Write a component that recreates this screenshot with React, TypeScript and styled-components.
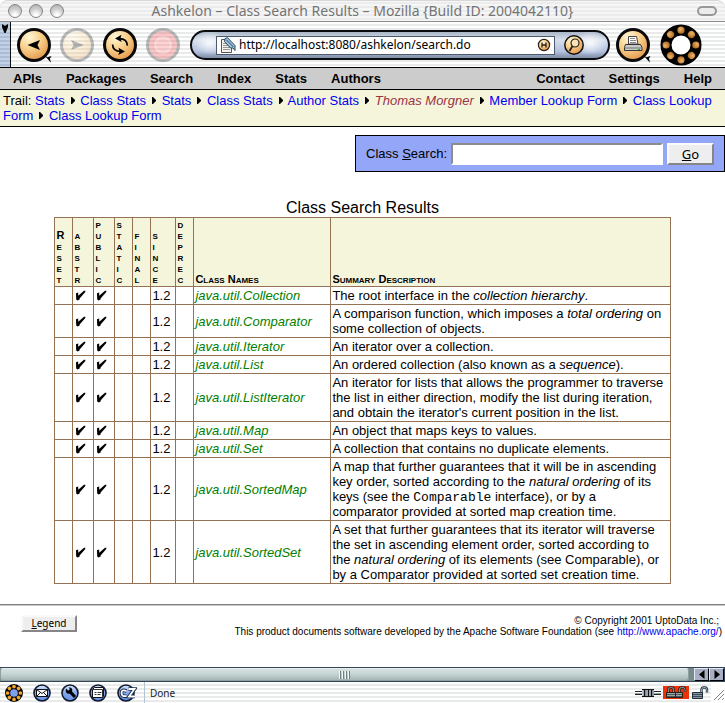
import React from "react";
import styled, { createGlobalStyle, css } from "styled-components";

const ui = `"Noto Sans", "DejaVu Sans", sans-serif`;
const stripes = css`
  background: repeating-linear-gradient(#ffffff 0 2px, #e9ebea 2px 4px);
`;

const Global = createGlobalStyle`
  * { box-sizing: border-box; }
  body {
    margin: 0;
    background: #fff;
    color: #000;
    font: 13px/15px "Liberation Sans", Arial, sans-serif;
  }
  a { color: #0000ee; text-decoration: none; }
  svg { display: block; flex: none; }
`;

const Window = styled.div`
  display: flex;
  flex-direction: column;
  min-height: 100vh;
`;
const TitleBar = styled.header`
  display: flex;
  align-items: center;
  height: 22px;
  padding: 0 8px;
  border-bottom: 1px solid #8c8c8c;
  border-radius: 8px 8px 0 0;
  background: repeating-linear-gradient(#f6f6f6 0 2px, #ececec 2px 4px);
  box-shadow: inset 0 1px #d8d8d8;
`;
const TitleSide = styled.div<{ $end?: boolean }>`
  display: flex;
  flex: 1;
  gap: 7px;
  justify-content: ${(p) => (p.$end ? "flex-end" : "flex-start")};
`;
const Light = styled.button`
  width: 14px;
  height: 14px;
  padding: 0;
  border: 1px solid #858585;
  border-radius: 50%;
  background: radial-gradient(circle at 50% 85%, #fff 10%, #d2d2d2 50%, #a9a9a9 100%);
`;
const Collapse = styled.button`
  width: 20px;
  height: 10px;
  padding: 0;
  border: 2px solid #989898;
  border-radius: 5px;
  background: #ececec;
`;
const Title = styled.h1`
  margin: 0;
  color: #747474;
  font: 14px/20px ${ui};
  white-space: nowrap;
`;

const Toolbar = styled.div`
  display: flex;
  align-items: center;
  height: 46px;
  padding-right: 23px;
  border-bottom: 1px solid #000;
  ${stripes}
`;
const Grippy = styled.button`
  align-self: stretch;
  display: flex;
  justify-content: center;
  width: 11px;
  padding: 2px 0;
  border: 0;
  border-right: 1px solid #111;
  background: repeating-linear-gradient(#c4d1e5 0 2px, #acbcd6 2px 4px);
`;
const RoundGroup = styled.div`
  display: flex;
  gap: 5px;
  margin: 0 8px 0 4px;
`;
const ToolButton = styled.button<{ $dim?: boolean }>`
  padding: 0;
  border: 0;
  background: none;
  opacity: ${(p) => (p.$dim ? 0.28 : 1)};
`;
const Pill = styled.div`
  display: flex;
  flex: 1;
  align-items: center;
  gap: 9px;
  height: 30px;
  margin-top: 1px;
  padding: 0 24px;
  border: 2px solid #0c0c10;
  border-radius: 15px;
  background:
    radial-gradient(ellipse 16px 12px at 18px 11px, #ffffffdd, #ffffff00),
    radial-gradient(ellipse 16px 12px at calc(100% - 18px) 11px, #ffffffdd, #ffffff00),
    linear-gradient(#a9b5c6, #d7dfed 30%, #b3c1df 75%, #7f8ca6);
`;
const UrlBox = styled.label`
  display: flex;
  flex: 1;
  align-items: center;
  gap: 3px;
  height: 19px;
  padding: 0 3px;
  border: 1px solid #4d5a6c;
  background: #fff;
`;
const UrlInput = styled.input`
  flex: 1;
  min-width: 0;
  padding: 0;
  border: 0;
  outline: 0;
  background: none;
  color: #000;
  font: 12px/16px ${ui};
`;

const Menu = styled.nav`
  display: flex;
  align-items: center;
  gap: 24px;
  height: 22px;
  padding: 0 13px;
  border-bottom: 1px solid #000;
  background: #ccc;
  font-weight: bold;
`;
const MenuLink = styled.a<{ $push?: boolean }>`
  color: #000;
  margin-left: ${(p) => (p.$push ? "auto" : "0")};
`;
const Trail = styled.div`
  padding: 3px;
  border-bottom: 1px solid #000;
  background: #f5f5dc;
`;
const Member = styled.a`
  color: #993344;
  font-style: italic;
`;
const Step = styled.svg`
  && {
    display: inline-block;
    margin: 0 2px 1px 6px;
  }
`;

const SearchForm = styled.form`
  display: flex;
  align-items: center;
  align-self: flex-end;
  gap: 4px;
  height: 37px;
  margin-top: 8px;
  padding: 0 10px;
  border: 1px solid #000;
  background: #94a6f7;
`;
const SearchInput = styled.input`
  width: 212px;
  height: 22px;
  border: 2px solid;
  border-color: #8c8c8c #fff #fff #8c8c8c;
  outline: 0;
  background: #fff;
  font: inherit;
`;
const PushButton = styled.button<{ $small?: boolean }>`
  width: ${(p) => (p.$small ? 56 : 47)}px;
  height: ${(p) => (p.$small ? 17 : 22)}px;
  padding: 0;
  border: 2px solid;
  border-color: #fafafa #868686 #868686 #fafafa;
  background: #eee;
  color: #000;
  font: ${(p) => (p.$small ? "10px/13px" : "13px/18px")} ${ui};
`;

const Results = styled.table`
  width: 85%;
  margin: 26px auto 0;
  border-collapse: collapse;
  table-layout: fixed;
`;
const Caption = styled.caption`
  font-size: 16px;
  line-height: 19px;
`;
const Col = styled.col<{ $w?: number }>`
  width: ${(p) => (p.$w ? `${p.$w}px` : "auto")};
`;
const cell = css`
  padding: 1px;
  border: 1px solid #967255;
  text-align: left;
`;
const Head = styled.th`
  ${cell}
  background: #f5f5dc;
  vertical-align: bottom;
  font-size: 11px;
  line-height: 11px;
  font-variant: small-caps;
`;
const Letter = styled.span`
  display: block;
`;
const Cell = styled.td`
  ${cell}
  vertical-align: middle;
`;
const Description = styled(Cell)`
  padding-right: 6px;
`;
const Tick = styled.svg`
  margin-left: 1px;
`;
const ClassLink = styled.a`
  color: #008000;
  font-style: italic;
`;
const Code = styled.code`
  font: 13px/12px "Liberation Mono", monospace;
`;

const Rule = styled.hr`
  width: 100%;
  margin: 20px 0 9px;
  border: 0;
  border-top: 1px solid #808080;
  border-bottom: 1px solid #c8c8c8;
`;
const Footer = styled.footer`
  display: flex;
  align-items: flex-start;
  justify-content: space-between;
  padding: 0 3px 0 21px;
`;
const Legal = styled.p`
  margin: 0;
  text-align: right;
  font-size: 10px;
  line-height: 11px;
`;
const LegalLine = styled.span<{ $inset?: boolean }>`
  display: block;
  padding-right: ${(p) => (p.$inset ? 3 : 0)}px;
`;

const ScrollBar = styled.div`
  display: flex;
  height: 15px;
  margin-top: auto;
  border: 1px solid #35455a;
  border-left-width: 0;
  background: #788b8b;
`;
const Thumb = styled.div`
  display: flex;
  flex: 1;
  align-items: center;
  justify-content: center;
  margin-right: 5px;
  border: 1px solid #8fa09f;
  border-top-color: #e6efee;
  border-radius: 3px;
  background: linear-gradient(#d5e1e0, #c4d3d2 50%, #a4b5b4);
`;
const ScrollButton = styled.button`
  display: flex;
  align-items: center;
  justify-content: center;
  width: 15px;
  padding: 0;
  border: 1px solid;
  border-color: #e4e8f4 #000 #000 #e4e8f4;
  background: #a9afc2;
`;
const Status = styled.div`
  display: flex;
  align-items: center;
  height: 21px;
  ${stripes}
`;
const StatusIcons = styled.div`
  display: flex;
  gap: 10px;
  padding: 0 7px 0 5px;
`;
const StatusText = styled.span`
  align-self: stretch;
  flex: 1;
  padding-left: 5px;
  border-left: 1px solid #b3c4d3;
  color: #222;
  font: 10px/22px ${ui};
`;
const Indicators = styled.div`
  display: flex;
  align-items: center;
  gap: 2px;
`;
const DefsHolder = styled.div`
  position: absolute;
`;

const Disc = ({ fill, children }: { fill: string; children?: React.ReactNode }) => (
  <svg width="38" height="38" viewBox="0 0 38 38">
    <circle cx="19" cy="19" r="15.5" fill={`url(#${fill})`} stroke="#0a0a0a" strokeWidth="3" />
    {children}
  </svg>
);

const Defs = () => (
  <svg width="0" height="0" aria-hidden="true">
    <defs>
      <radialGradient id="amber" cx=".35" cy=".25" r=".85">
        <stop offset="0" stopColor="#fff6d5" />
        <stop offset=".45" stopColor="#f8cf8b" />
        <stop offset="1" stopColor="#df8f40" />
      </radialGradient>
      <radialGradient id="red" cx=".5" cy=".5" r=".5">
        <stop offset="0" stopColor="#ff6868" />
        <stop offset=".5" stopColor="#ee2a30" />
        <stop offset="1" stopColor="#ee4146" />
      </radialGradient>
      <linearGradient id="blue" x1="0" y1="0" x2="0" y2="1">
        <stop offset="0" stopColor="#dde9ff" />
        <stop offset=".5" stopColor="#83a8ee" />
        <stop offset="1" stopColor="#6790e6" />
      </linearGradient>
      <radialGradient id="bead" cx=".4" cy=".35" r=".6">
        <stop offset="0" stopColor="#ecb66c" />
        <stop offset="1" stopColor="#b06d24" />
      </radialGradient>
    </defs>
  </svg>
);

const Corner = () => <path d="M30 30l2.5 1.200 4-1.200-1.600 2.800 1.200 4-3-3.400z" fill="#000" />;

const angles = [0, 45, 90, 135, 180, 225, 270, 315];

const Check = () => (
  <Tick width="11" height="11" viewBox="0 0 11 11" role="img" aria-label="yes">
    <path d="M1 3.2L3.2 2.5V5.8L9 .8H10.300V2L4.600 8.600V9.600L2.600 10.400L1.200 9.500Z" fill="#000" />
  </Tick>
);

const Badge = ({ children }: { children: React.ReactNode }) => (
  <svg width="18" height="18" viewBox="0 0 18 18">
    <circle cx="9" cy="9" r="8" fill="url(#blue)" stroke="#101a30" strokeWidth="1.6" />
    {children}
  </svg>
);

const crumbs = ["Stats", "Class Stats", "Stats", "Class Stats", "Author Stats", "Thomas Morgner", "Member Lookup Form", "Class Lookup Form", "Class Lookup Form"];
const flags = ["Reset", "abstr", "public", "static", "final", "since", "deprec"];
const widths = [18, 21, 21, 18, 18, 25, 18, 137];
const rows: [string, React.ReactNode][] = [
  ["Collection", <>The root interface in the <i>collection hierarchy</i>.</>],
  ["Comparator", <>A comparison function, which imposes a <i>total ordering</i> on some collection of objects.</>],
  ["Iterator", <>An iterator over a collection.</>],
  ["List", <>An ordered collection (also known as a <i>sequence</i>).</>],
  ["ListIterator", <>An iterator for lists that allows the programmer to traverse the list in either direction, modify the list during iteration, and obtain the iterator's current position in the list.</>],
  ["Map", <>An object that maps keys to values.</>],
  ["Set", <>A collection that contains no duplicate elements.</>],
  ["SortedMap", <>A map that further guarantees that it will be in ascending key order, sorted according to the <i>natural ordering</i> of its keys (see the <Code>Comparable</Code> interface), or by a comparator provided at sorted map creation time.</>],
  ["SortedSet", <>A set that further guarantees that its iterator will traverse the set in ascending element order, sorted according to the <i>natural ordering</i> of its elements (see Comparable), or by a Comparator provided at sorted set creation time.</>],
];

const Browser = () => (
  <>
    <TitleBar>
      <TitleSide>
        <Light aria-label="Close" />
        <Light aria-label="Minimize" />
        <Light aria-label="Zoom" />
      </TitleSide>
      <Title>{"Ashkelon – Class Search Results – Mozilla {Build ID: 2004042110}"}</Title>
      <TitleSide $end>
        <Collapse aria-label="Toggle toolbar" />
      </TitleSide>
    </TitleBar>
    <Toolbar>
      <Grippy aria-label="Collapse toolbar">
        <svg width="8" height="9" viewBox="0 0 8 9"><path d="M1 0l3 2 3-2v3L4.6 9H3.4L1 3z" /></svg>
      </Grippy>
      <RoundGroup>
        <ToolButton aria-label="Back">
          <Disc fill="amber"><path d="M12.5 19l12.500-5-2.500 5 2.500 5z" /><Corner /></Disc>
        </ToolButton>
        <ToolButton aria-label="Forward" $dim>
          <Disc fill="amber"><path d="M26 19l-13-5 2.5 5-2.5 5z" /></Disc>
        </ToolButton>
        <ToolButton aria-label="Reload">
          <Disc fill="amber">
            <path d="M18 12.6q8-.2 8.4 7M20 25.4q-8.4-.2-8.4-7" fill="none" stroke="#000" strokeWidth="1.7" />
            <path d="M14 12.5l6.5-3.8-1 3.6 1.2 3.8zM24 25.5l-6.5-3.8 1 3.8-1.2 3.6z" />
          </Disc>
        </ToolButton>
        <ToolButton aria-label="Stop" $dim>
          <Disc fill="red"><circle cx="19" cy="19" r="8" fill="#f66" stroke="#ff9a9a" strokeWidth="1.5" /></Disc>
        </ToolButton>
      </RoundGroup>
      <Pill>
        <UrlBox>
          <svg width="16" height="17" viewBox="0 0 16 17">
            <path d="M1.5 2.5h6l4 4v9h-10z" fill="#f2f2ec" stroke="#555" />
            <path d="M3 6.5h4M3 8.5h5M3 10.5h7M3 12.5h7" stroke="#999" />
            <path d="M5 1.5l2.5-.8L15 8.5v5l-2-2.5h-2.5L4.500 4.500z" fill="#9cc4df" stroke="#29445f" />
            <path d="M6.5 3l7 7" stroke="#29445f" />
          </svg>
          <UrlInput aria-label="Address" defaultValue="http://localhost:8080/ashkelon/search.do" />
          <svg width="14" height="14" viewBox="0 0 14 14">
            <circle cx="7" cy="7" r="5.6" fill="url(#amber)" stroke="#2b2014" strokeWidth="1.2" />
            <path d="M5 4.5v5M9 4.5v5M5 7h4" stroke="#222" strokeWidth="1.3" />
          </svg>
        </UrlBox>
        <ToolButton aria-label="Search the web">
          <svg width="20" height="22" viewBox="0 0 20 22">
            <circle cx="10" cy="11" r="9.2" fill="url(#amber)" stroke="#111" strokeWidth="1.5" />
            <circle cx="11" cy="9" r="4" fill="#fbe3b4" stroke="#222" strokeWidth="1.2" />
            <path d="M8.5 12L5.5 17" stroke="#222" strokeWidth="1.8" />
          </svg>
        </ToolButton>
      </Pill>
      <RoundGroup>
        <ToolButton aria-label="Print">
          <Disc fill="amber">
            <path d="M14.5 18v-7.5h8L24 18z" fill="#fff" stroke="#444" />
            <path d="M16 12.5h5M16 14.5h6M16 16.5h6" stroke="#888" />
            <path d="M11.5 18.5h15l1.5 3v3H10.5v-3z" fill="#c9ccc9" stroke="#333" />
            <path d="M11 22h16" stroke="#6d786d" />
            <path d="M24 23.5h2" stroke="#2a2" />
            <Corner />
          </Disc>
        </ToolButton>
      </RoundGroup>
      <ToolButton aria-label="Mozilla home">
        <svg width="42" height="42" viewBox="0 0 42 42">
          <circle cx="21" cy="21" r="15" fill="#fff" stroke="#000" strokeWidth="11" />
          {angles.map((a) => (
            <circle key={a} cx="21" cy="6.2" r="3.6" fill="url(#bead)" transform={`rotate(${a} 21 21)`} />
          ))}
        </svg>
      </ToolButton>
    </Toolbar>
  </>
);

export default function App() {
  return (
    <Window>
      <Global />
      <DefsHolder><Defs /></DefsHolder>
      <Browser />
      <Menu>
        {["APIs", "Packages", "Search", "Index", "Stats", "Authors", "Contact", "Settings", "Help"].map((m) => (
          <MenuLink key={m} href="#" $push={m === "Contact"}>{m}</MenuLink>
        ))}
      </Menu>
      <Trail>
        Trail:{" "}
        {crumbs.map((c, i) => (
          <React.Fragment key={i}>
            {i > 0 && <><Step width="4" height="7" viewBox="0 0 4 7"><path d="M0 0h1l3 3v1L1 7H0z" /></Step>{" "}</>}
            {c === "Thomas Morgner" ? <Member href="#">{c}</Member> : <a href="#">{c}</a>}
          </React.Fragment>
        ))}
      </Trail>
      <SearchForm onSubmit={(e) => e.preventDefault()}>
        <label htmlFor="q">Class <u>S</u>earch:</label>
        <SearchInput id="q" />
        <PushButton><u>G</u>o</PushButton>
      </SearchForm>
      <Results>
        <Caption>Class Search Results</Caption>
        <colgroup>
          {widths.map((w, i) => <Col key={i} $w={w} />)}
          <Col />
        </colgroup>
        <thead>
          <tr>
            {flags.map((f) => (
              <Head key={f} aria-label={f}>
                {f.split("").map((l, i) => <Letter key={i}>{l}</Letter>)}
              </Head>
            ))}
            <Head>Class Names</Head>
            <Head>Summary Description</Head>
          </tr>
        </thead>
        <tbody>
          {rows.map(([name, text]) => (
            <tr key={name}>
              <Cell />
              <Cell><Check /></Cell>
              <Cell><Check /></Cell>
              <Cell />
              <Cell />
              <Cell>1.2</Cell>
              <Cell />
              <Cell><ClassLink href="#">java.util.{name}</ClassLink></Cell>
              <Description>{text}</Description>
            </tr>
          ))}
        </tbody>
      </Results>
      <Rule />
      <Footer>
        <PushButton $small><u>L</u>egend</PushButton>
        <Legal>
          <LegalLine $inset>© Copyright 2001 UptoData Inc.;</LegalLine>
          <LegalLine>
            This product documents software developed by the Apache Software Foundation (see <a href="#">http://www.apache.org/</a>)
          </LegalLine>
        </Legal>
      </Footer>
      <ScrollBar>
        <Thumb>
          <svg width="12" height="8" viewBox="0 0 12 8">
            <path d="M1.5 0v8M4.5 0v8M7.5 0v8M10.500 0v8" stroke="#71827f" />
            <path d="M.5 0v8M3.5 0v8M6.5 0v8M9.500 0v8" stroke="#eff6f5" />
          </svg>
        </Thumb>
        <ScrollButton aria-label="Scroll left"><svg width="6" height="9" viewBox="0 0 6 9"><path d="M5.5 0v9L0 4.5z" /></svg></ScrollButton>
        <ScrollButton aria-label="Scroll right"><svg width="6" height="9" viewBox="0 0 6 9"><path d="M.5 0v9L6 4.5z" /></svg></ScrollButton>
      </ScrollBar>
      <Status>
        <StatusIcons>
          <ToolButton aria-label="Navigator">
            <svg width="18" height="18" viewBox="0 0 42 42">
              <circle cx="21" cy="21" r="15" fill="#7f9ff0" stroke="#000" strokeWidth="12" />
              {angles.map((a) => (
                <circle key={a} cx="21" cy="6" r="4.3" fill="#f0a830" transform={`rotate(${a} 21 21)`} />
              ))}
            </svg>
          </ToolButton>
          <ToolButton aria-label="Mail">
            <Badge>
              <path d="M3.5 5.5h11v7h-11z" fill="#fff" stroke="#111" />
              <path d="M3.5 5.5l5.5 4 5.5-4M3.5 12.500l4-4M14.5 12.500l-4-4" fill="none" stroke="#111" />
            </Badge>
          </ToolButton>
          <ToolButton aria-label="Composer">
            <Badge><path d="M5 4.5l2.2 2.2L9 5 7.5 3.5C10.5 3 12 5 11 7.5l4 4.5-2 2-4.5-4.5C6 10.5 4 8 5 4.5z" /></Badge>
          </ToolButton>
          <ToolButton aria-label="Address book">
            <Badge>
              <path d="M3.5 5.5l2-2h9v9h-1v1h-10z" fill="#fff" stroke="#111" />
              <path d="M4 5.5h9.5v7M5.5 8.5h2M5.5 10.5h2M8.5 8.5h4M8.5 10.5h3" fill="none" stroke="#333" />
            </Badge>
          </ToolButton>
          <ToolButton aria-label="ChatZilla">
            <svg width="20" height="18" viewBox="0 0 20 18">
              <circle cx="9" cy="9" r="8" fill="url(#blue)" stroke="#101a30" strokeWidth="1.6" />
              <path d="M9.500 7Q4.5 5 4.5 9T9.500 12M11.500 5h6L12 12.500h6" fill="none" stroke="#1c2c4c" strokeWidth="3.6" />
              <path d="M9.500 7Q4.5 5 4.5 9T9.500 12M11.500 5h6L12 12.500h6" fill="none" stroke="#fff" strokeWidth="1.8" />
            </svg>
          </ToolButton>
        </StatusIcons>
        <StatusText>Done</StatusText>
        <Indicators>
          <svg width="26" height="12" viewBox="0 0 26 12">
            <path d="M0 4.5h26M0 7.5h26" stroke="#222" />
            <path d="M0 5.5h26" stroke="#fff" />
            <path d="M0 6.500h26" stroke="#99a3ae" />
            <path d="M7 2.500h12v7H7z" fill="#c3ccd6" />
            <path d="M7 2.500h12M7 9.500h12" stroke="#111" />
            <path d="M9.500 2v8M13.500 2v8M16.500 2v8" stroke="#111" strokeWidth="1.400" />
            <path d="M11 3v6M18 3v6" stroke="#66727e" />
          </svg>
          <svg width="26" height="13" viewBox="0 0 26 13">
            <path d="M0 0h26v13H0z" fill="#ee3208" />
            <path d="M5.500 7V3.500q0-2 2-2h1q2 0 2 2V7M16.500 7V3.500q0-2 2-2h1.500q2 0 2 2V6" fill="none" stroke="#222" strokeWidth="2.400" />
            <path d="M5.500 7V3.500q0-2 2-2h1q2 0 2 2V7M16.500 7V3.500q0-2 2-2h1.500q2 0 2 2V6" fill="none" stroke="#a9b2b4" strokeWidth=".8" />
            <path d="M3.5 6.500h9v5h-9zM12.500 6.500h7v5h-7z" fill="#9da7a8" stroke="#222" />
            <path d="M4 8.5h8M13 8.5h6M4 10.5h8M13 10.5h6" stroke="#4d5758" />
          </svg>
          <svg width="18" height="14" viewBox="0 0 18 14">
            <path d="M10.500 7V4q0-2.500 2-2.500h1.500q2 0 2 2.500v2.500" fill="none" stroke="#26323e" strokeWidth="2.400" />
            <path d="M10.500 7V4q0-2.500 2-2.500h1.500q2 0 2 2.500v2.500" fill="none" stroke="#b9c4cf" strokeWidth=".8" />
            <path d="M1.5 6.5h10v6h-10z" fill="#8796a5" stroke="#222e38" />
            <path d="M2 8.5h9M2 10.5h9" stroke="#3c4956" />
          </svg>
          <svg width="14" height="18" viewBox="0 0 14 18">
            <path d="M0 0h14v18H0z" fill="#fff" />
            <path d="M3 16L13 6M7 16l6-6M11 16l2-2" stroke="#888" />
          </svg>
        </Indicators>
      </Status>
    </Window>
  );
}
